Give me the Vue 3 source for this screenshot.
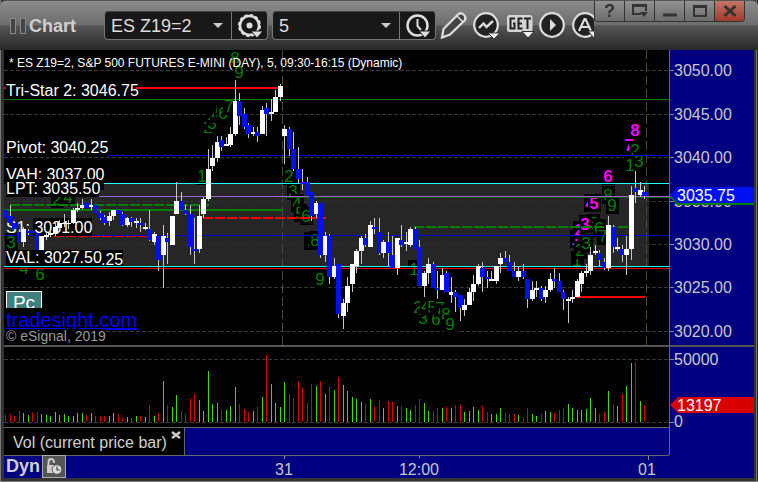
<script setup>
import { ref } from 'vue'

const symbol = ref('ES Z19=2')
const interval = ref('5')

// One entry per bar: direction (w rising, b falling), wick top, body top, body bottom, wick bottom
const bars = `b 210 210 218 218|b 205 216 223 223|b 223 223 229 229|b 229 232 242 242|w 227 229 242 247|b 229 231 233 235|b 231 231 233 233|b 233 233 251 251|w 236 236 251 252|w 231 235 237 240|w 232 233 235 237|w 222 227 234 236|w 220 223 228 230|w 214 223 224 227|w 220 223 224 229|w 208 210 223 224|w 203 208 210 212|w 199 205 208 209|b 203 203 208 208|w 199 205 207 210|b 205 205 213 213|b 211 213 218 220|b 215 217 223 225|w 212 216 221 226|w 210 210 216 220|b 210 210 214 214|b 212 214 225 226|w 217 218 225 227|b 217 218 222 227|w 218 221 223 228|b 218 223 225 232|w 223 227 229 230|b 210 229 240 241|w 232 234 242 245|b 236 236 260 271|w 225 236 255 288|b 233 238 242 264|w 216 216 245 245|w 182 201 214 214|b 192 201 210 210|b 205 210 214 215|b 205 214 247 255|b 218 249 251 264|w 205 216 249 253|w 197 199 214 218|w 149 169 199 201|w 145 158 166 171|w 136 142 158 162|b 136 140 147 151|w 137 144 146 146|w 127 134 145 147|w 80 101 134 136|b 93 101 116 125|b 108 114 127 129|b 123 125 134 138|w 127 132 134 136|b 127 132 136 142|w 106 110 134 134|b 103 108 114 136|w 99 112 114 121|w 90 97 112 112|w 84 86 97 101|w 125 129 136 164|b 127 129 149 156|b 132 149 169 171|b 147 169 179 183|b 169 182 184 190|b 177 182 195 195|b 192 192 216 221|w 201 203 214 218|b 203 203 255 258|w 232 236 255 262|b 234 236 277 284|w 258 266 277 279|b 264 264 314 318|w 299 303 316 329|w 277 286 303 312|w 264 264 284 292|w 249 251 266 273|w 236 238 251 264|b 234 238 245 247|w 221 225 247 247|b 218 227 229 234|b 218 232 253 255|w 240 242 253 258|b 232 242 253 266|b 236 255 268 268|w 238 238 268 275|b 225 240 245 247|w 232 242 244 251|w 227 229 245 247|b 227 229 249 249|b 240 247 286 286|w 271 273 286 297|w 258 264 273 284|b 262 264 288 288|b 271 288 290 299|w 268 275 290 290|b 271 273 292 292|w 277 292 295 303|b 290 292 297 312|b 295 295 308 321|w 299 305 310 316|w 288 292 305 305|w 275 284 292 301|w 264 266 284 286|b 262 268 277 292|b 271 277 279 288|w 271 279 281 281|w 266 266 281 284|w 253 258 264 273|b 251 258 262 262|b 255 262 271 271|b 262 271 277 277|w 266 271 277 281|b 264 271 277 279|b 279 279 299 308|w 281 290 299 301|w 281 288 290 297|b 286 288 299 301|w 286 290 297 303|w 273 279 290 292|b 268 279 281 288|b 273 281 292 292|b 290 292 299 310|w 297 299 301 323|w 290 297 299 303|w 279 281 297 297|w 271 273 284 292|w 264 271 273 277|w 247 255 271 275|w 245 251 253 255|b 250 253 260 266|b 258 262 268 270|w 216 225 268 271|b 225 227 247 253|w 238 247 249 251|b 245 249 255 262|w 236 249 255 275|w 186 195 249 260|b 171 188 192 203|w 182 190 195 197|b 186 192 196 199`
  .split('|')
  .map((row, i) => {
    const [dir, high, top, bottom, low] = row.split(' ')
    return { x: barX(i), up: dir === 'w', high: +high, top: +top, bottom: +bottom, low: +low }
  })

// Volume per bar: g on an up tick, r on a down tick, then the bar height
const volumes = 'r7 r8 r6 r11 g9 g7 r9 r10 g8 g7 g6 g10 g7 g8 g6 g6 g9 g9 r7 g9 r6 r6 r6 g6 g9 r8 r4 g5 r4 g6 r6 g5 r17 g6 r9 g41 r17 g15 g27 r11 r8 r23 r28 g22 g11 g51 g18 g19 r12 g12 g16 g35 r18 r13 r10 g11 r15 g25 r67 g38 g19 g15 g40 r28 r24 r41 r34 r19 r38 g36 r41 g28 r35 g32 r45 g37 g31 g25 g23 g20 r18 g23 r16 r22 g14 r21 r20 g16 r16 g14 g12 r17 r23 g19 g11 r11 r14 g14 r15 g14 r17 r17 g10 g11 g15 g12 r16 r10 g8 g8 g14 r9 r8 r8 g7 r5 r14 g8 g6 r8 g11 g10 r9 r12 r14 g18 g14 g12 g12 g13 g24 g14 r8 r10 g31 r18 g16 r28 g36 g59 r60 g21 r17'
  .split(' ')
  .map((v, i) => ({ x: barX(i), up: v[0] === 'g', h: +v.slice(1) }))

function barX(i) {
  return Math.floor(5.5 + 4.5 * i)
}

const prices = [
  ['3050.00', 70], ['3045.00', 114], ['3040.00', 157], ['3035.00', 201],
  ['3030.00', 244], ['3025.00', 287], ['3020.00', 331]
]

// Sequence counts in paint order: digit, centre x, baseline y, countdown flag.
// Each has an opaque backing, so a later count hides part of an earlier one.
const counts = [
  ['8', 235, 64], ['9', 239, 78], ['2', 208, 133], ['3', 212, 129], ['4', 216, 120], ['5', 220, 118],
  ['6', 223, 119], ['7', 229, 112], ['1', 202, 182], ['2', 289, 182], ['3', 293, 197], ['4', 297, 209],
  ['5', 300, 219], ['6', 306, 222], ['7', 310, 247], ['8', 315, 246], ['9', 320, 285],
  ['1', 414, 275], ['2', 418, 313], ['3', 423, 324], ['4', 426, 312], ['5', 432, 313], ['6', 436, 325],
  ['7', 440, 314], ['8', 446, 320], ['9', 450, 330],
  ['1', 577, 266], ['5', 593, 229], ['1', 576, 245, true], ['2', 579, 236, true], ['3', 585, 230, true],
  ['2', 580, 256], ['3', 586, 249], ['6', 599, 234], ['7', 603, 242], ['8', 608, 201], ['9', 612, 211],
  ['4', 590, 209, true], ['5', 594, 209, true], ['6', 608, 182, true], ['7', 629, 151, true],
  ['1', 630, 171], ['2', 635, 156], ['3', 639, 167], ['8', 635, 136, true],
  ['2', 57, 205], ['4', 68, 203], ['3', 11, 248], ['4', 24, 274], ['6', 40, 280]
]
</script>

<template>
  <main class="window">
    <header class="bar">
      <div class="title">
        <svg width="16" height="16" aria-hidden="true">
          <rect x=".5" y=".5" width="5" height="15" /><rect x="10.5" y=".5" width="5" height="15" />
        </svg>
        <h1>Chart</h1>
      </div>
      <div class="tools">
        <div class="group">
          <div class="pick">
            <select v-model="symbol" aria-label="Symbol"><option>ES Z19=2</option></select>
            <svg width="10" height="5" aria-hidden="true"><path d="M0 0H10L5 5Z" /></svg>
          </div>
          <button class="cell" aria-label="Settings">
            <svg width="26" height="26" viewBox="0 0 26 26">
              <circle cx="12.500" cy="12.500" r="9.500" fill="none" stroke="#ddd" stroke-width="2.500" />
              <circle cx="12.500" cy="12.500" r="10.800" fill="none" stroke="#ddd" stroke-width="1.500" stroke-dasharray="3.400 2.250" />
              <circle cx="12.500" cy="12.500" r="3" fill="#ddd" />
              <path d="M14 18H26L20 25Z" fill="#ddd" stroke="#181818" />
            </svg>
          </button>
        </div>
        <div class="group">
          <div class="pick">
            <select v-model="interval" aria-label="Interval"><option>5</option></select>
            <svg width="10" height="5" aria-hidden="true"><path d="M0 0H10L5 5Z" /></svg>
          </div>
          <button class="cell" aria-label="Time template">
            <svg width="26" height="26" viewBox="0 0 26 26">
              <circle cx="12.500" cy="12.500" r="10" fill="none" stroke="#ddd" stroke-width="2.500" />
              <path d="M12.500 6V13L16 17" fill="none" stroke="#ddd" stroke-width="2" />
              <path d="M14 18H26L20 25Z" fill="#ddd" stroke="#181818" />
            </svg>
          </button>
        </div>
        <div class="icons">
          <button aria-label="Draw">
            <svg width="26" height="28" viewBox="0 0 26 28">
              <path d="M1 26.500L2.500 18 17 3.500Q19.500 1 22.500 3.500T24 9L9 23.500Z" fill="#444" stroke="#ddd" stroke-width="2.200" />
              <path d="M16 5L22.500 11.500" stroke="#ddd" stroke-width="1.500" />
            </svg>
          </button>
          <button aria-label="Studies">
            <svg width="27" height="28" viewBox="0 0 27 28">
              <circle cx="12" cy="14" r="11.800" fill="#222" stroke="#ddd" stroke-width="2.200" />
              <path d="M5 17L9.500 12.500 12.500 16 19 10" fill="none" stroke="#ddd" stroke-width="2.400" />
              <path d="M14 22H26L20 28Z" fill="#eee" stroke="#333" />
            </svg>
          </button>
          <button aria-label="Advanced GET">
            <svg width="27" height="28" viewBox="0 0 27 28">
              <path d="M0 6.500Q0 4 2.500 4H23Q25.500 4 25.500 6.500V18.500Q25.500 21 23 21H2.500Q0 21 0 18.500Z" fill="#d4d4d4" />
              <path d="M8 7.500H3.500V17.500H7.500V12.500H6M15.500 7.500H11.500V17.500H15.500M11.500 12.500H15M17 7.500H24M20.500 7.500V18" fill="none" stroke="#222" stroke-width="2" />
              <path d="M15 20.500H27L21 27Z" fill="#eee" stroke="#333" />
            </svg>
          </button>
          <button aria-label="Play">
            <svg width="26" height="28" viewBox="0 0 26 28">
              <circle cx="12" cy="14" r="11.800" fill="#222" stroke="#ddd" stroke-width="2.200" />
              <path d="M10 8L16 14 10 20Z" fill="#ddd" />
            </svg>
          </button>
          <button aria-label="Alerts">
            <svg width="26" height="28" viewBox="0 0 26 28">
              <circle cx="12" cy="14" r="11.800" fill="#222" stroke="#ddd" stroke-width="2.200" />
              <path d="M6 20L11.500 8H12.500L18 20M8 16H16" fill="none" stroke="#ddd" stroke-width="2.200" />
              <path d="M15 20H27L21 27Z" fill="#eee" stroke="#333" />
            </svg>
          </button>
        </div>
      </div>
      <div class="controls">
        <button aria-label="Help">?</button>
        <button aria-label="Window options">
          <svg width="16" height="14"><path d="M9 10H1V1H14V7M1 2H14" /><path class="solid" d="M8 8H16L12 13Z" /></svg>
        </button>
        <button aria-label="Minimize"><svg width="14" height="12"><path d="M0 10H14" class="thick" /></svg></button>
        <button aria-label="Maximize"><svg width="14" height="12"><path d="M1 1H13V11H1ZM1 2H13" /></svg></button>
        <button class="close" aria-label="Close">
          <svg width="14" height="12"><path d="M1.500 1L12.500 11M12.500 1L1.500 11" class="thick" /></svg>
        </button>
      </div>
    </header>

    <div class="body">
      <section class="plots">
        <div class="price">
          <svg class="plot" width="100%" height="295" role="img" aria-label="S&amp;P 500 futures price chart">
            <g transform="translate(-4 -50)">
              <rect x="4" y="184" width="645" height="82" fill="#262626" />
              <line v-for="p in prices" :key="p[0]" x1="4" x2="101%" :y1="p[1] + 0.5" :y2="p[1] + 0.5" class="grid" :class="{ dim: p[1] > 190 && p[1] < 260 }" />
              <path d="M282.500 50V345M646.500 50V345" class="upright" />
              <g v-for="(c, i) in counts" :key="i" class="digits" :class="{ hot: c[3] }">
                <rect :x="c[1] - 6" :y="c[2] - 15" width="13" height="18" fill="#000" />
                <text :x="c[1]" :y="c[2]">{{ c[0] }}</text>
              </g>
              <path d="M4 88H282M576 297H645" stroke="#f00" stroke-width="2" />
              <line x1="4" x2="101%" y1="99.5" y2="99.5" stroke="#008000" />
              <line x1="4" x2="101%" y1="155.5" y2="155.5" stroke="#0000e0" />
              <line x1="104" x2="101%" y1="183.5" y2="183.5" stroke="#20ffff" />
              <line x1="282" x2="101%" y1="197.5" y2="197.5" stroke="#006000" />
              <line x1="99" x2="101%" y1="196.5" y2="196.5" stroke="#a060d8" />
              <path d="M10 205H209M414 227H628" class="dashed" stroke="#008000" />
              <path d="M4 210H283" stroke="#008000" stroke-width="2" />
              <path d="M203 218H326" class="dashed" stroke="#f00" />
              <line x1="4" x2="101%" y1="235.5" y2="235.5" stroke="#0000d0" />
              <path d="M54 236.500H148" class="dashed thin" stroke="#f00" />
              <line x1="4" x2="101%" y1="266.5" y2="266.5" stroke="#20ffff" />
              <line x1="4" x2="101%" y1="268.5" y2="268.5" stroke="#f00" />
              <path d="M33 218H92V236H33Z" fill="#000" />
              <text x="6" y="233" class="level">S1: 3031.00</text>
              <g v-for="b in bars" :key="b.x">
                <rect :x="b.x" :y="b.high" width="1" :height="b.low - b.high" fill="#c8c8c8" />
                <rect :x="b.x - 2" :y="b.top" width="5" :height="b.bottom - b.top" :fill="b.up ? '#fff' : '#0010f0'" />
              </g>
              <path d="M6 81H136V98H6ZM6 138H107V156H6ZM6 169H104V190H6ZM96 250H123V266H96Z" fill="#000" />
              <text x="6" y="96" class="level">Tri-Star 2: 3046.75</text>
              <text x="6" y="153" class="level">Pivot: 3040.25</text>
              <text x="6" y="180" class="level">VAH: 3037.00</text>
              <path d="M6 179H99V197H6ZM6 250H102V266H6Z" fill="#000" />
              <text x="6" y="194" class="level">LPT: 3035.50</text>
              <text x="6" y="263" class="level">VAL: 3027.50</text>
              <text x="101" y="265" class="level">.25</text>
              <text x="9" y="67" class="caption">* ES Z19=2, S&amp;P 500 FUTURES E-MINI (DAY), 5, 09:30-16:15 (Dynamic)</text>
            </g>
          </svg>
          <div class="credits">
            <button class="pc">Pc</button>
            <a href="#tradesight">tradesight.com</a>
            <small>© eSignal, 2019</small>
          </div>
        </div>
        <svg class="plot volume" width="100%" height="80" role="img" aria-label="Volume">
          <g transform="translate(-4 -347)">
            <line x1="4" x2="101%" y1="359.5" y2="359.5" class="grid" />
            <line x1="4" x2="101%" y1="422.5" y2="422.5" class="grid" />
            <rect v-for="v in volumes" :key="v.x" :x="v.x" :y="422 - v.h" width="1" :height="v.h" :fill="v.up ? '#48d800' : '#d80000'" />
          </g>
        </svg>
        <div class="tabs">
          <div class="tab"><span>Vol (current price bar)</span>
            <button aria-label="Close volume"><svg width="10" height="8"><path d="M1 1L9 7M9 1L1 7" stroke="#ccc" stroke-width="2.500" /></svg></button>
          </div>
        </div>
      </section>
      <svg class="axis" width="85" height="405" role="img" aria-label="Price and volume scale">
        <g transform="translate(-669 -50)">
          <g v-for="p in prices" :key="p[0]">
            <rect x="669" :y="p[1]" width="5" height="1" fill="#888" />
            <text x="674" :y="p[1] + 6" class="scale">{{ p[0] }}</text>
          </g>
          <path d="M670 196L678 204H754" fill="none" stroke="#008000" stroke-width="2" />
          <path d="M670 195L678 187H754V203H678Z" fill="#0010f0" />
          <text x="677" y="201" class="scale tag">3035.75</text>
          <path d="M669.500 50V455" stroke="#666" />
          <path d="M669 346H754" stroke="#555" stroke-width="2" />
          <path d="M669 359.500H674M669 422.500H674" stroke="#888" />
          <text x="674" y="365" class="scale">50000</text>
          <text x="674" y="427" class="scale">0</text>
          <path d="M670 405L678 397H754V413H678Z" fill="#d80000" />
          <text x="677" y="411" class="scale tag">13197</text>
        </g>
      </svg>
    </div>

    <footer class="time">
      <button class="dyn">Dyn</button>
      <button class="lock" aria-label="Lock time scale">
        <svg width="16" height="17" viewBox="0 0 16 17">
          <path d="M2.500 8V4Q2.500 1 5 1T8 4V5" fill="none" stroke="#ccc" stroke-width="2" />
          <path d="M1 7H10V15H1Z" fill="#ccc" />
          <circle cx="11" cy="11.500" r="4.800" fill="#ddd" stroke="#555" />
          <path d="M11 8.500V12H14" fill="none" stroke="#444" stroke-width="1.200" />
        </svg>
      </button>
      <svg class="ticks" height="22" role="img" aria-label="Time scale">
        <g transform="translate(-66 -456)">
          <path d="M284.500 456V459M419.500 456V458M648.500 456V460" stroke="#888" />
          <text x="284" y="475" class="scale">31</text>
          <text x="419" y="475" class="scale">12:00</text>
          <text x="647" y="475" class="scale">01</text>
        </g>
      </svg>
    </footer>
  </main>
</template>

<style>
body { background: #333; }
</style>

<style scoped>
* { box-sizing: border-box; }
svg { display: block; }
button { padding: 0; border: 0; background: none; color: inherit; font: inherit; }
.window {
  font-family: "Liberation Sans", Arial, sans-serif;
  font-size: 16px;
  color: #d0d0d0;
  background: #333;
  border-bottom: 1px solid #777;
  padding-bottom: 3px;
  box-shadow: inset 1px 0 #777, inset -1px 0 #222, inset -2px 0 #777;
}
.bar {
  display: flex;
  height: 50px;
  border-top: 1px solid #555;
  border-radius: 6px 6px 0 0;
  background: linear-gradient(#8c8c8c, #6c6c6c 24px, #545454 25px, #282828);
}
.title { display: flex; align-items: center; width: 104px; padding-left: 10px; gap: 3px; flex: none; }
.title rect { fill: #444; stroke: #888; }
.title h1 { margin: 0; font-size: 18px; line-height: 22px; }
.tools { display: flex; flex: 1; min-width: 0; overflow: hidden; gap: 4px; padding-top: 10px; }
.group {
  display: flex;
  flex: none;
  height: 29px;
  background: #181818;
  border: 1px solid #777;
  border-top-color: #444;
  border-radius: 4px;
}
.pick { display: flex; align-items: center; width: 126px; padding-right: 8px; }
.pick select {
  flex: 1;
  min-width: 0;
  appearance: none;
  background: none;
  border: 0;
  padding: 0 0 0 6px;
  color: #ddd;
  font: 18px "Liberation Sans", Arial, sans-serif;
}
.pick path { fill: #ccc; }
.cell { display: grid; place-items: center; width: 36px; border-left: 1px solid #777; }
.icons { display: flex; gap: 7px; padding-left: 1px; }
.icons button { flex: none; width: 26px; height: 28px; }
.icons svg { overflow: visible; }
.controls {
  display: flex;
  flex: none;
  height: 21px;
  margin-right: 13px;
  border: 1px solid #333;
  border-top: 0;
  border-radius: 0 0 4px 4px;
  overflow: hidden;
}
.controls button {
  display: grid;
  place-items: center;
  width: 30px;
  color: #333;
  font-size: 18px;
  font-weight: bold;
  line-height: 20px;
  background: linear-gradient(#929292, #6c6c6c);
  border-right: 1px solid #333;
}
.controls .close { border-right: 0; background: linear-gradient(#c47466, #a33c2c); width: 29px; }
.controls path { fill: none; stroke: #333; stroke-width: 2; }
.controls .thick { stroke-width: 3; }
.controls .solid { fill: #333; stroke: none; }
.body { display: flex; margin: 0 4px; background: #000080; }
.plots { flex: 1; min-width: 0; }
.plot { background: #000; overflow: hidden; }
.price { position: relative; border-bottom: 2px solid #555; }
.axis { flex: none; }
.grid { stroke: #383838; stroke-dasharray: 4 2; }
.dim { stroke: #303030; }
.upright { stroke: #484848; stroke-dasharray: 9 4; }
.dashed { stroke-width: 2; stroke-dasharray: 10 2; }
.thin { stroke-width: 1; }
.digits { font-size: 17px; }
.digits text { fill: #008000; text-anchor: middle; }
.hot { font-weight: bold; }
.hot text { fill: #f0f; }
.level { font-size: 16px; fill: #fff; }
.caption { font-size: 12px; fill: #fff; }
.scale { font-size: 16px; fill: #c8c8c8; }
.tag { fill: #fff; }
.credits {
  position: absolute;
  left: 2px;
  bottom: 2px;
  display: flex;
  flex-direction: column;
  align-items: flex-start;
}
.pc {
  width: 36px;
  height: 17px;
  margin-bottom: 3px;
  border: 1px solid #fff;
  border-bottom: 0;
  background: #408080;
  color: #fff;
  font-size: 19px;
  line-height: 22px;
  overflow: hidden;
}
.credits a { color: #0000ff; background: #000; font-size: 20px; line-height: 18px; }
.credits small { color: #999; background: #000; font-size: 14px; line-height: 14px; }
.tabs { display: flex; height: 28px; border-top: 1px solid #666; }
.tab {
  display: flex;
  width: 181px;
  padding: 3px 3px 0 9px;
  justify-content: space-between;
  background: #000;
  border-right: 1px solid #666;
  line-height: 24px;
  white-space: nowrap;
}
.tab button { height: 8px; }
.time {
  display: flex;
  height: 23px;
  margin: 0 4px;
  background: linear-gradient(to right, #666 calc(100% - 85px), #000080 calc(100% - 85px)) 0 0 / 100% 1px no-repeat #000080;
}
.dyn { width: 38px; font-size: 18px; font-weight: bold; text-align: left; padding-left: 2px; }
.lock { display: grid; place-items: center; width: 24px; border: 1px solid #aaa; background: #555; }
.ticks { flex: 1; min-width: 0; margin-top: 1px; }
.ticks text { text-anchor: middle; }
</style>
